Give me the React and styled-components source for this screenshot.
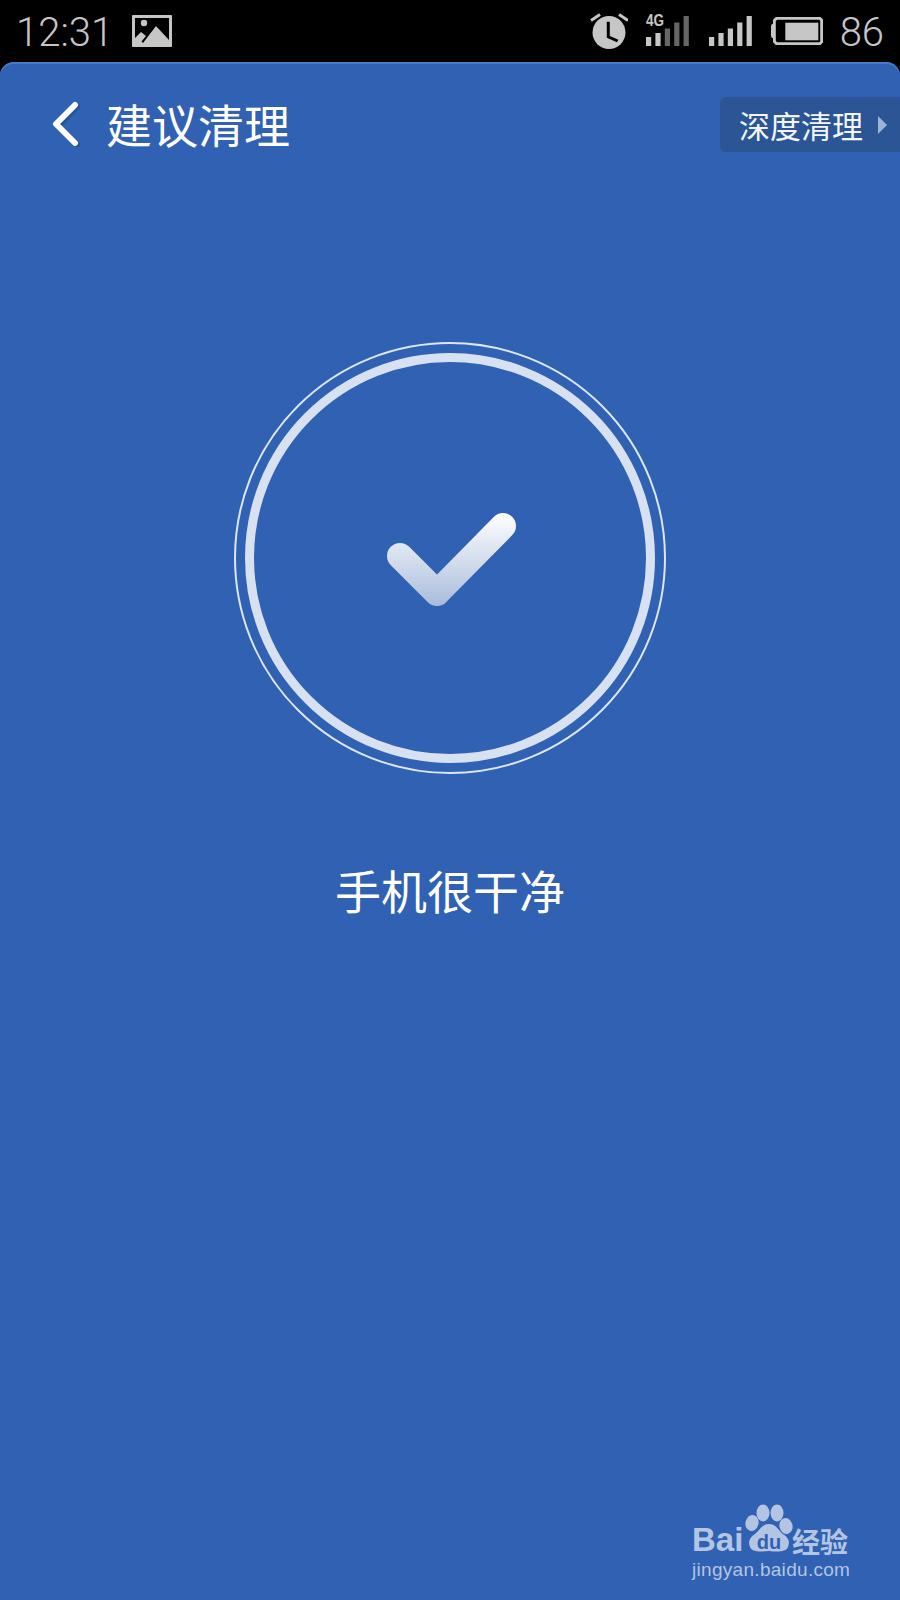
import React from 'react';
import styled, { createGlobalStyle } from 'styled-components';

const GlobalStyle = createGlobalStyle`
  html, body {
    margin: 0;
    padding: 0;
    background: #000;
  }
`;

const CJK = `"Noto Sans CJK SC", "Noto Sans", sans-serif`;

const Screen = styled.div`
  position: relative;
  width: 900px;
  height: 1600px;
  display: flex;
  flex-direction: column;
  overflow: hidden;
  background: #000;
`;

const StatusBar = styled.div`
  height: 62px;
  flex: none;
  display: flex;
  align-items: center;
  padding: 0 16px;
  box-sizing: border-box;
  color: #c6c6c6;
`;

const StatusText = styled.span`
  margin-top: 4px;
  margin-left: ${(props) => props.$pull || 0}px;
  font-family: Roboto, "Liberation Sans", sans-serif;
  font-weight: 300;
  font-size: 40px;
  line-height: 58px;
`;

const StatusLeft = styled.div`
  display: flex;
  align-items: center;
  gap: 19px;
`;

const StatusRight = styled.div`
  margin-left: auto;
  display: flex;
  align-items: center;
  gap: 18.5px;
`;

const Panel = styled.main`
  flex: 1;
  display: flex;
  flex-direction: column;
  align-items: center;
  background: #3061b2;
  border-radius: 14px 14px 0 0;
  box-shadow: inset 0 2px 0 #477ac4;
`;

const Header = styled.header`
  width: 100%;
  height: 92px;
  margin-top: 30px;
  display: flex;
  align-items: flex-start;
`;

const BackButton = styled.div`
  width: 106px;
  height: 62px;
  flex: none;
  display: flex;
  align-items: center;
  padding-left: 50px;
  box-sizing: border-box;
`;

const Title = styled.h1`
  margin: 0;
  font-family: ${CJK};
  font-weight: 400;
  font-size: 46px;
  line-height: 62px;
  color: #fff;
  letter-spacing: 0;
`;

const DeepClean = styled.div`
  margin-left: auto;
  margin-top: 5px;
  width: 180px;
  height: 55px;
  display: flex;
  align-items: center;
  padding-left: 19px;
  gap: 15px;
  box-sizing: border-box;
  background: #2b5595;
  border-radius: 6px 0 0 6px;
  font-family: ${CJK};
  font-size: 31px;
  color: #f2f5fa;
`;

const Arrow = styled.span`
  width: 0;
  height: 0;
  border-left: 9px solid #9db4da;
  border-top: 9px solid transparent;
  border-bottom: 9px solid transparent;
`;

const Rings = styled.div`
  width: 432px;
  height: 432px;
  margin-top: 158px;
  flex: none;
  display: flex;
  align-items: center;
  justify-content: center;
  box-sizing: border-box;
  border: 2px solid #dce6f5;
  border-radius: 50%;
`;

const InnerRing = styled.div`
  width: 410px;
  height: 410px;
  display: flex;
  align-items: center;
  justify-content: center;
  box-sizing: border-box;
  border: 9px solid #d8e1f2;
  border-radius: 50%;
`;

const Message = styled.p`
  margin: 84px 0 0;
  font-family: ${CJK};
  font-size: 46px;
  line-height: 62px;
  color: #fff;
`;

const Watermark = styled.div`
  position: absolute;
  left: 691px;
  top: 1503px;
  width: 170px;
  height: 90px;
  color: #b4c5e4;
`;

const BaiText = styled.span`
  position: absolute;
  left: 1px;
  top: 16px;
  font-family: "Liberation Sans", sans-serif;
  font-weight: 700;
  font-size: 33px;
  line-height: 42px;
`;

const DuText = styled.span`
  position: absolute;
  left: 57px;
  top: 27px;
  width: 42px;
  text-align: center;
  font-family: "Liberation Sans", sans-serif;
  font-weight: 700;
  font-size: 20px;
  line-height: 24px;
  color: #3061b2;
`;

const JingyanText = styled.span`
  position: absolute;
  left: 101px;
  top: 22px;
  font-family: ${CJK};
  font-weight: 700;
  font-size: 28px;
  line-height: 32px;
  white-space: nowrap;
`;

const SiteText = styled.span`
  position: absolute;
  left: 1px;
  top: 56px;
  font-family: "Liberation Sans", sans-serif;
  font-size: 19px;
  line-height: 22px;
  white-space: nowrap;
  letter-spacing: 0.3px;
`;

const PawIcon = styled.svg`
  position: absolute;
  left: 54px;
  top: 1px;
`;

const PictureIcon = () => (
  <svg width="40" height="32" viewBox="0 0 40 32">
    <rect width="40" height="32" rx="1" fill="#c6c6c6" />
    <path d="M3 3H37V25L24 11L11 28L9.5 26.5L14 21L9 17L3 23Z" fill="#000" />
    <circle cx="12" cy="8" r="3.2" fill="#c6c6c6" />
  </svg>
);

const AlarmIcon = () => (
  <svg width="38" height="36" viewBox="0 0 38 36">
    <circle cx="19" cy="19.5" r="16.5" fill="#c6c6c6" />
    <path d="M18.3 8.8V23.8L27.7 28" fill="none" stroke="#000" strokeWidth="3" />
    <path d="M1 7.5L10 1.5M38 7.5L29 1.5" stroke="#c6c6c6" strokeWidth="3" />
  </svg>
);

const barHeights = [9, 13, 17.5, 23.5, 30];

const SignalBars = ({ active }) =>
  barHeights.map((h, i) => (
    <rect
      key={i}
      x={i * 9.4}
      y={30 - h}
      width="5.2"
      height={h}
      fill={i < active ? '#c6c6c6' : '#666'}
    />
  ));

const MobileSignal = () => (
  <svg width="44" height="30" viewBox="0 0 44 30" overflow="visible">
    <SignalBars active={2} />
    <text
      x="0"
      y="10"
      fontFamily="Liberation Sans"
      fontSize="16"
      fontWeight="700"
      fill="#c6c6c6"
      textLength="18"
      lengthAdjust="spacingAndGlyphs"
    >
      4G
    </text>
  </svg>
);

const WifiSignal = () => (
  <svg width="44" height="30" viewBox="0 0 44 30">
    <SignalBars active={5} />
  </svg>
);

const BatteryIcon = () => (
  <svg width="52" height="28" viewBox="0 0 52 28">
    <path d="M3.4 7H1L0 9V19L1 21H3.4Z" fill="#c6c6c6" />
    <path d="M5.4 1.4H49L50.6 3V25L49 26.6H5.4L3.4 24.6V3.4Z" fill="none" stroke="#c6c6c6" strokeWidth="2.8" />
    <rect x="14.3" y="5.7" width="33" height="17.6" fill="#c6c6c6" />
  </svg>
);

const BackChevron = () => (
  <svg width="32" height="48" viewBox="0 0 32 48">
    <path d="M25 6L6 25L25 44" fill="none" stroke="#1f4a8a" strokeWidth="6" strokeLinecap="round" strokeLinejoin="round" transform="translate(2 2)" opacity="0.6" />
    <path d="M25 6L6 25L25 44" fill="none" stroke="#fff" strokeWidth="6" strokeLinecap="round" strokeLinejoin="round" />
  </svg>
);

const CheckMark = () => (
  <svg width="140" height="106" viewBox="0 0 140 106">
    <defs>
      <linearGradient id="checkFill" gradientUnits="userSpaceOnUse" x1="0" y1="8" x2="0" y2="101">
        <stop offset="0" stopColor="#ffffff" />
        <stop offset="1" stopColor="#a9bcdc" />
      </linearGradient>
    </defs>
    <path d="M20 51L57 88L123 21" fill="none" stroke="url(#checkFill)" strokeWidth="26" strokeLinecap="round" strokeLinejoin="round" />
  </svg>
);

const Paw = () => (
  <PawIcon width="48" height="48" viewBox="0 0 48 48">
    <ellipse cx="7" cy="19" rx="6.5" ry="8" fill="#b4c5e4" transform="rotate(15 7 19)" />
    <ellipse cx="18" cy="9" rx="6.5" ry="8.5" fill="#b4c5e4" />
    <ellipse cx="32" cy="9" rx="6.5" ry="8.5" fill="#b4c5e4" />
    <ellipse cx="41" cy="22" rx="6.5" ry="8" fill="#b4c5e4" transform="rotate(-15 41 22)" />
    <path d="M24 20C17 20 15 26 10 30C4 34 3 38 5 43C7 48 15 48 24 47C33 48 41 48 43 43C45 38 44 34 38 30C33 26 31 20 24 20Z" fill="#b4c5e4" />
  </PawIcon>
);

export default function App() {
  return (
    <Screen>
      <GlobalStyle />
      <StatusBar>
        <StatusLeft>
          <StatusText>12:31</StatusText>
          <PictureIcon />
        </StatusLeft>
        <StatusRight>
          <AlarmIcon />
          <MobileSignal />
          <WifiSignal />
          <BatteryIcon />
          <StatusText $pull={-2}>86</StatusText>
        </StatusRight>
      </StatusBar>
      <Panel>
        <Header>
          <BackButton>
            <BackChevron />
          </BackButton>
          <Title>建议清理</Title>
          <DeepClean>
            深度清理
            <Arrow />
          </DeepClean>
        </Header>
        <Rings>
          <InnerRing>
            <CheckMark />
          </InnerRing>
        </Rings>
        <Message>手机很干净</Message>
      </Panel>
      <Watermark>
        <BaiText>Bai</BaiText>
        <Paw />
        <DuText>du</DuText>
        <JingyanText>经验</JingyanText>
        <SiteText>jingyan.baidu.com</SiteText>
      </Watermark>
    </Screen>
  );
}
